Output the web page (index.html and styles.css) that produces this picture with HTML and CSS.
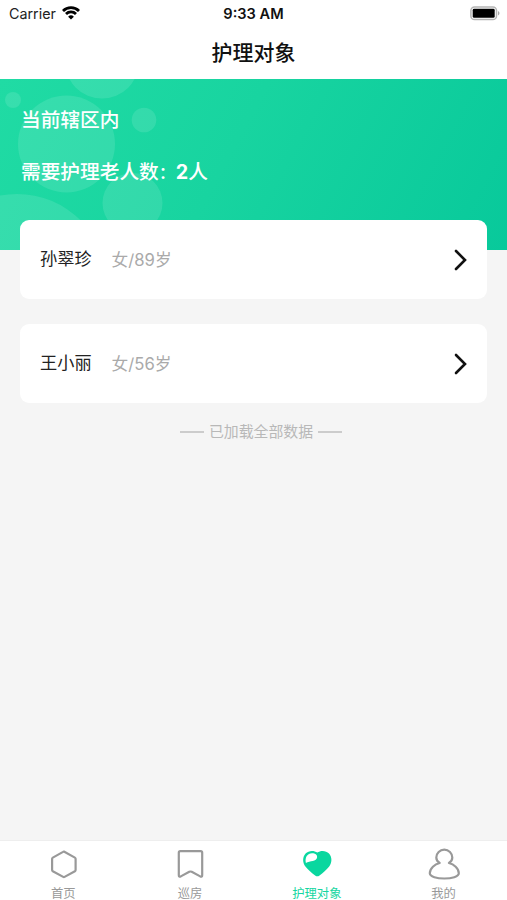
FILE: index.html
```html
<!DOCTYPE html>
<html lang="zh-CN">
<head>
<meta charset="utf-8">
<meta name="viewport" content="width=device-width, initial-scale=1">
<title>护理对象</title>
<link rel="stylesheet" href="styles.css">
</head>
<body>
<div class="app">
  <header class="status">
    <div class="carrier"><span>Carrier</span>
      <svg width="18" height="14" viewBox="0 0 18 14" fill="none" stroke="#000" stroke-width="2.8"><path d="M1 4.9a11.3 11.3 0 0 1 16 0M4 8a7.1 7.1 0 0 1 10 0"/><path d="M9 13.6 6.1 10.7a4.1 4.1 0 0 1 5.8 0Z" fill="#000" stroke="none"/></svg>
    </div>
    <div class="time">9:33 AM</div>
    <svg class="battery" width="31" height="16" viewBox="0 0 31 16"><rect x=".9" y="1" width="25.600" height="12.500" rx="3.6" fill="#fff" stroke="#b5b5b5" stroke-width="1.5"/><rect x="2.700" y="2.800" width="22" height="9" rx="1.4"/><path d="M28 5.1c2 .8 2 3.6 0 4.4Z" fill="#aaa"/></svg>
  </header>
  <h1 class="title">护理对象</h1>
  <main class="content">
    <section class="banner">
      <svg class="bubbles" width="507" height="171" viewBox="0 79 507 171" fill="#fff" fill-opacity=".11"><circle cx="102" cy="61.5" r="37"/><circle cx="13" cy="100" r="8"/><circle cx="66.500" cy="144" r="48.500"/><circle cx="144" cy="120" r="12.300"/><circle cx="132.500" cy="203" r="30"/><circle cx="17" cy="284" r="90"/></svg>
      <p>当前辖区内</p>
      <p>需要护理老人数<span class="colon">：</span><b>2</b>人</p>
    </section>
    <section class="list">
      <article class="card"><span class="name">孙翠珍</span><span class="info">女/89岁</span><svg class="chevron" width="14" height="22" viewBox="0 0 14 22"><path d="m2 2 9 9-9 9"/></svg></article>
      <article class="card"><span class="name">王小丽</span><span class="info">女/56岁</span><svg class="chevron" width="14" height="22" viewBox="0 0 14 22"><path d="m2 2 9 9-9 9"/></svg></article>
    </section>
    <div class="end"><i></i><span>已加载全部数据</span><i></i></div>
  </main>
  <nav class="tabs">
    <a class="tab"><svg width="34" height="34" viewBox="0 0 34 34"><path d="m17.900 4.500 11 6.100q.7.400.7 1.200v11.200q0 .8-.7 1.200l-10.300 5.700q-.7.400-1.400 0L6.800 24.200q-.7-.4-.7-1.200V11.800q0-.8.700-1.200L17.100 4.900q.4-.3.800-.4Z"/></svg><span>首页</span></a>
    <a class="tab"><svg width="34" height="34" viewBox="0 0 34 34"><path d="M7.300 4.200h20.400q1.500 0 1.500 1.500v22.500q0 2.200-2 1.200l-8.500-4.600q-1.200-.6-2.400 0l-8.500 4.600q-2 1-2-1.200V5.700q0-1.500 1.500-1.500Z"/></svg><span>巡房</span></a>
    <a class="tab active"><svg width="34" height="34" viewBox="0 0 34 34"><path class="fill" d="M17.300 5.500C20.500 3.200 26 3.200 29 6.500c3.300 3.600 3.200 9.300 0 13.200-2.500 3.200-6 6.200-9.500 8.700-1.700 1.200-2.700 1.200-4.400 0-3.500-2.500-7-5.500-9.500-8.700-3.200-3.900-3.300-9.600 0-13.200C8.600 3.200 14.100 3.200 17.300 5.500Z"/><path class="shine" d="M5.900 16C4.600 10.500 7.400 6.200 12.100 6.200c3.200 0 5.300 1.600 5 4-.5 4.400-7.300 3.400-11.200 5.800Z"/></svg><span>护理对象</span></a>
    <a class="tab"><svg width="34" height="34" viewBox="0 0 34 34"><path d="M12.700 16c-2.300-1.300-3.400-3.100-3.400-5.500a8 7.900 0 0 1 16 0c0 2.400-1.100 4.200-3.400 5.500 4.900 1.300 9.900 5.200 9.900 10.300 0 6.900-29 6.900-29 0 0-5.100 5-9 9.900-10.300Z"/></svg><span>我的</span></a>
  </nav>
</div>
</body>
</html>
```
FILE: styles.css
```css
* { box-sizing: border-box; }
body {
  margin: 0;
  background: #f5f5f5;
  color: #222;
  font-family: Inter, "Noto Sans CJK SC", sans-serif;
}
.app { display: flex; flex-direction: column; height: 900px; overflow: hidden; }
.status {
  display: grid;
  grid-template-columns: 1fr auto 1fr;
  grid-template-rows: 27px;
  align-items: center;
  height: 27px;
  padding: 0 6px 0 9px;
  background: #fff;
  line-height: 24px;
}
.carrier { display: flex; align-items: center; gap: 6px; font-size: 14.300px; }
.carrier svg { margin-top: -2px; }
.time { margin-left: -3px; padding-top: 1px; color: #111; font-size: 14.600px; font-weight: 600; }
.battery { justify-self: end; }
.title {
  height: 52px;
  margin: 0;
  background: #fff;
  color: #111;
  font-size: 21px;
  font-weight: 500;
  line-height: 52px;
  text-align: center;
}
.content { flex: 1; }
.banner {
  position: relative;
  height: 171px;
  padding: 21px 21px 0;
  background: linear-gradient(118deg, #20dba4 0%, #18d4a0 45%, #08c99b 100%);
  color: #fff;
  font-size: 19.700px;
  font-weight: 500;
}
.bubbles { position: absolute; inset: 0; }
.banner p { position: relative; height: 52px; margin: 0; line-height: 40px; }
.banner b { font-weight: 700; }
.colon { font-size: 17px; line-height: 1; }
.list { position: relative; display: grid; gap: 25px; margin-top: -30px; padding: 0 20px; }
.card {
  display: flex;
  align-items: center;
  height: 79px;
  padding: 0 19px 0 20px;
  border-radius: 9px;
  background: #fff;
  font-size: 17px;
}
.name { padding-bottom: 4px; font-size: 17.200px; }
.info { margin-left: 20px; padding-bottom: 2px; color: #aaa; font-size: 16.700px; }
.chevron { margin-left: auto; }
.chevron path { fill: none; stroke: #111; stroke-width: 2.600; stroke-linecap: round; stroke-linejoin: miter; }
.end {
  display: flex;
  align-items: center;
  justify-content: center;
  gap: 5px;
  margin-top: 17px;
  padding-left: 15px;
  color: #b8b8b8;
  font-size: 14.900px;
  line-height: 24px;
}
.end i { width: 24px; height: 2px; background: #ccc; }
.tabs {
  display: grid;
  grid-template-columns: repeat(4, 1fr);
  height: 60px;
  border-top: 1px solid #eee;
  background: #fff;
}
.tab {
  display: flex;
  flex-direction: column;
  align-items: center;
  padding-top: 6px;
  color: #999;
  font-size: 12.300px;
  line-height: 26px;
}
.tab path { fill: none; stroke: #999; stroke-width: 2.200; stroke-linejoin: round; }
.tab .fill { fill: #09d79f; stroke: none; }
.tab .shine { fill: #fff; stroke: none; }
.active { color: #15d6a1; }
```
